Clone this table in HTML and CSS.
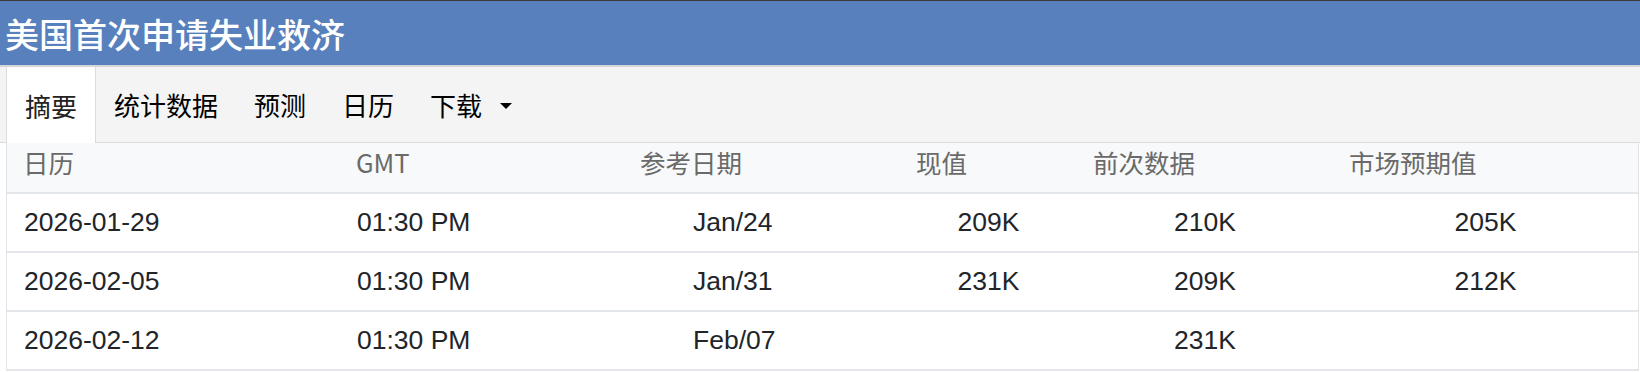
FILE: index.html
```html
<!DOCTYPE html>
<html lang="zh-CN">
<head>
<meta charset="utf-8">
<title>美国首次申请失业救济</title>
<link rel="stylesheet" href="styles.css">
</head>
<body>
<div class="topline"></div>
<header class="titlebar">美国首次申请失业救济</header>
<nav class="tabs">
  <a class="tab active">摘要</a>
  <a class="tab">统计数据</a>
  <a class="tab">预测</a>
  <a class="tab">日历</a>
  <a class="tab">下载<span class="caret"></span></a>
</nav>
<div class="table">
  <div class="row head">
    <div class="c">日历</div>
    <div class="c">GMT</div>
    <div class="c">参考日期</div>
    <div class="c">现值</div>
    <div class="c">前次数据</div>
    <div class="c">市场预期值</div>
  </div>
  <div class="row">
    <div class="c">2026-01-29</div>
    <div class="c">01:30 PM</div>
    <div class="c ref">Jan/24</div>
    <div class="c mid">209K</div>
    <div class="c mid">210K</div>
    <div class="c mid">205K</div>
  </div>
  <div class="row">
    <div class="c">2026-02-05</div>
    <div class="c">01:30 PM</div>
    <div class="c ref">Jan/31</div>
    <div class="c mid">231K</div>
    <div class="c mid">209K</div>
    <div class="c mid">212K</div>
  </div>
  <div class="row">
    <div class="c">2026-02-12</div>
    <div class="c">01:30 PM</div>
    <div class="c ref">Feb/07</div>
    <div class="c mid"></div>
    <div class="c mid">231K</div>
    <div class="c mid"></div>
  </div>
</div>
</body>
</html>
```
FILE: styles.css
```css
html, body {
  margin: 0;
  padding: 0;
  background: #ffffff;
}
body {
  font-family: "Liberation Sans", "Noto Sans CJK SC", sans-serif;
  color: #212529;
}
.topline {
  height: 1px;
  background: #3b3b3b;
}
.titlebar {
  height: 64px;
  background: #5880bd;
  color: #ffffff;
  font-family: "Noto Sans CJK SC", sans-serif;
  font-size: 34px;
  font-weight: 500;
  display: flex;
  align-items: center;
  padding-left: 5px;
  border-bottom: 2px solid #d3d6da;
}
.tabs {
  display: flex;
  align-items: flex-start;
  height: 75px;
  background: #f4f4f4;
  border-bottom: 1px solid #dcdcdc;
  padding-left: 6px;
  font-family: "Noto Sans CJK SC", sans-serif;
  font-size: 26px;
  font-weight: 400;
  color: #000000;
}
.tab {
  display: flex;
  align-items: center;
  height: 75px;
  padding: 0 18px;
}
.tab.active {
  background: #ffffff;
  border-left: 1px solid #dcdcdc;
  border-right: 1px solid #dcdcdc;
  height: 76px;
  color: #222;
}
.caret {
  display: inline-block;
  width: 0;
  height: 0;
  margin-left: 18px;
  margin-top: 2px;
  border-top: 6px solid #000;
  border-left: 6px solid transparent;
  border-right: 6px solid transparent;
}
.table {
  margin: 0 1px 0 6px;
  border-left: 1px solid #e2e4e7;
  border-right: 1px solid #e2e4e7;
}
.row {
  display: grid;
  grid-template-columns: 333px 284px 276px 177px 256px 1fr;
  height: 57px;
  border-bottom: 2px solid #e3e6ea;
  font-size: 26.5px;
  align-items: center;
}
.row.head {
  height: 49px;
  background: #f8f9fa;
  color: #6a6a6a;
  font-family: "Noto Sans CJK SC", sans-serif;
  font-size: 25.5px;
  align-items: start;
}
.row.head .c {
  padding-top: 1px;
  line-height: 36px;
  padding-left: 16px;
}
.c {
  padding-left: 17px;
  white-space: nowrap;
}
.c.ref {
  padding-left: 69px;
}
.c.mid {
  padding-left: 0;
  text-align: center;
}
```
